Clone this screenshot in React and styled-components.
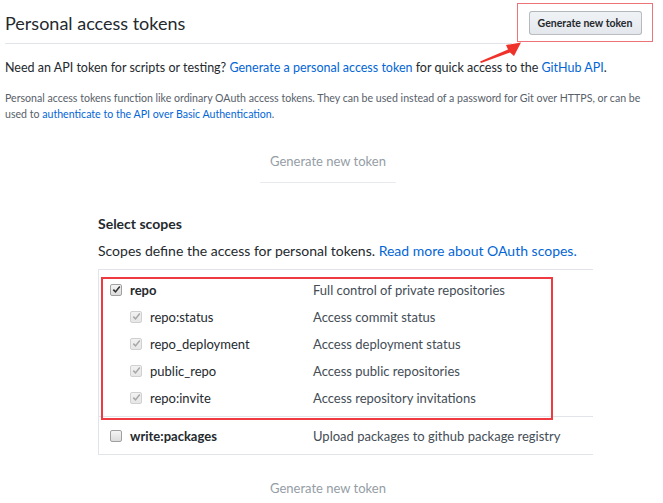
import React from "react";
import styled, { createGlobalStyle } from "styled-components";

const GlobalStyle = createGlobalStyle`
  body {
    margin: 0;
    background: #fff;
    font-family: Lato, "Liberation Sans", sans-serif;
    color: #24292e;
  }
`;

const Page = styled.div`
  position: relative;
  width: 663px;
  height: 503px;
  overflow: hidden;
  padding-left: 5px;
  box-sizing: border-box;
`;

const Header = styled.div`
  display: flex;
  align-items: flex-start;
`;

const Title = styled.h2`
  flex: 1;
  margin: 0;
  height: 44px;
  box-sizing: border-box;
  padding-top: 11px;
  font-size: 18px;
  font-weight: 400;
  line-height: 24px;
  border-bottom: 1px solid #e1e4e8;
`;

const Callout = styled.div`
  width: 136px;
  height: 39px;
  margin: 3px 10px 0 5px;
  box-sizing: border-box;
  border: 1.5px solid #ec7378;
  display: flex;
  align-items: center;
  justify-content: center;
`;

const Button = styled.button`
  width: 113px;
  height: 24px;
  padding: 0;
  font-family: inherit;
  font-size: 10.5px;
  font-weight: 700;
  color: #24292e;
  border: 1px solid rgba(27, 31, 35, 0.25);
  border-radius: 3px;
  background: linear-gradient(#f0f3f6, #e4e8ec);
`;

const Lead = styled.p`
  margin: 15px 0 0;
  font-size: 12.5px;
  line-height: 18px;
`;

const Note = styled.p`
  margin: 13px 0 0;
  font-size: 10.6px;
  line-height: 16px;
  color: #586069;
`;

const Link = styled.a`
  color: #0366d6;
  text-decoration: none;
`;

const GhostButton = styled.div`
  width: 136px;
  margin: ${(p) => p.$top}px 0 0 255px;
  padding-bottom: 12px;
  border-bottom: ${(p) => (p.$line ? "1px solid #e8eaed" : "none")};
  text-align: center;
  font-size: 13px;
  line-height: 18px;
  color: #959da5;
`;

const Scopes = styled.div`
  margin: 32px 0 0 93px;
`;

const ScopesTitle = styled.h3`
  margin: 0;
  font-size: 14px;
  font-weight: 700;
  line-height: 18px;
`;

const ScopesText = styled.p`
  margin: 9px 0 0;
  font-size: 14px;
  line-height: 18px;
`;

const Table = styled.div`
  margin-top: 9px;
  width: 494px;
  border-left: 1px solid #e1e4e8;
  border-top: 1px solid #e1e4e8;
`;

const Group = styled.div`
  padding: ${(p) => (p.$tight ? "5px 0" : "6px 0 5px")};
  border-bottom: 1px solid #e1e4e8;
`;

const Row = styled.div`
  display: grid;
  grid-template-columns: 214px 1fr;
  height: 27px;
  align-items: center;
  font-size: 13px;
  color: #24292e;
`;

const Name = styled.label`
  display: flex;
  align-items: center;
  gap: 8px;
  padding-left: ${(p) => (p.$sub ? 31 : 11)}px;
  font-weight: ${(p) => (p.$sub ? 400 : 700)};
`;

const Box = styled.span`
  width: 12px;
  height: 12px;
  border-radius: 2px;
  box-sizing: border-box;
  border: 1px solid ${(p) => (p.$disabled ? "#d0d0d0" : "#a0a0a0")};
  background: ${(p) =>
    p.$disabled
      ? "linear-gradient(#f2f2f2, #e6e6e6)"
      : "linear-gradient(#f4f4f4, #dcdcdc)"};
  display: flex;
  align-items: center;
  justify-content: center;
`;

const Desc = styled.span`
  color: #444d56;
`;

const Highlight = styled.div`
  position: absolute;
  left: 101px;
  top: 277px;
  width: 452px;
  height: 143px;
  box-sizing: border-box;
  border: 2px solid #ee3a40;
  pointer-events: none;
`;

const Arrow = styled.svg`
  position: absolute;
  left: 470px;
  top: 38px;
`;

const Check = ({ disabled }) => (
  <svg width="9" height="9" viewBox="0 0 9 9">
    <path
      d="M1.3 4.6 L3.5 6.9 L7.8 1.6"
      fill="none"
      stroke={disabled ? "#a8a8a8" : "#333"}
      strokeWidth="1.6"
    />
  </svg>
);

const CheckBox = ({ checked, disabled }) => (
  <Box $disabled={disabled}>{checked && <Check disabled={disabled} />}</Box>
);

const repoScopes = [
  ["repo:status", "Access commit status"],
  ["repo_deployment", "Access deployment status"],
  ["public_repo", "Access public repositories"],
  ["repo:invite", "Access repository invitations"],
];

export default function App() {
  return (
    <Page>
      <GlobalStyle />
      <Header>
        <Title>Personal access tokens</Title>
        <Callout>
          <Button>Generate new token</Button>
        </Callout>
      </Header>
      <Lead>
        Need an API token for scripts or testing?{" "}
        <Link>Generate a personal access token</Link> for quick access to the{" "}
        <Link>GitHub API</Link>.
      </Lead>
      <Note>
        Personal access tokens function like ordinary OAuth access tokens. They
        can be used instead of a password for Git over HTTPS, or can be used to{" "}
        <Link>authenticate to the API over Basic Authentication</Link>.
      </Note>
      <GhostButton $top={30} $line>
        Generate new token
      </GhostButton>
      <Scopes>
        <ScopesTitle>Select scopes</ScopesTitle>
        <ScopesText>
          Scopes define the access for personal tokens.{" "}
          <Link>Read more about OAuth scopes.</Link>
        </ScopesText>
        <Table>
          <Group>
            <Row>
              <Name>
                <CheckBox checked />
                repo
              </Name>
              <Desc>Full control of private repositories</Desc>
            </Row>
            {repoScopes.map(([name, desc]) => (
              <Row key={name}>
                <Name $sub>
                  <CheckBox checked disabled />
                  {name}
                </Name>
                <Desc>{desc}</Desc>
              </Row>
            ))}
          </Group>
          <Group $tight>
            <Row>
              <Name>
                <CheckBox />
                write:packages
              </Name>
              <Desc>Upload packages to github package registry</Desc>
            </Row>
          </Group>
        </Table>
      </Scopes>
      <GhostButton $top={24}>Generate new token</GhostButton>
      <Highlight />
      <Arrow width="60" height="32" viewBox="0 0 60 32">
        <path
          d="M10 23.5 L38 11.5 L36 7 L51 4.5 L44 18 L40 14.5 L11 25 Z"
          fill="#f0332a"
        />
      </Arrow>
    </Page>
  );
}
